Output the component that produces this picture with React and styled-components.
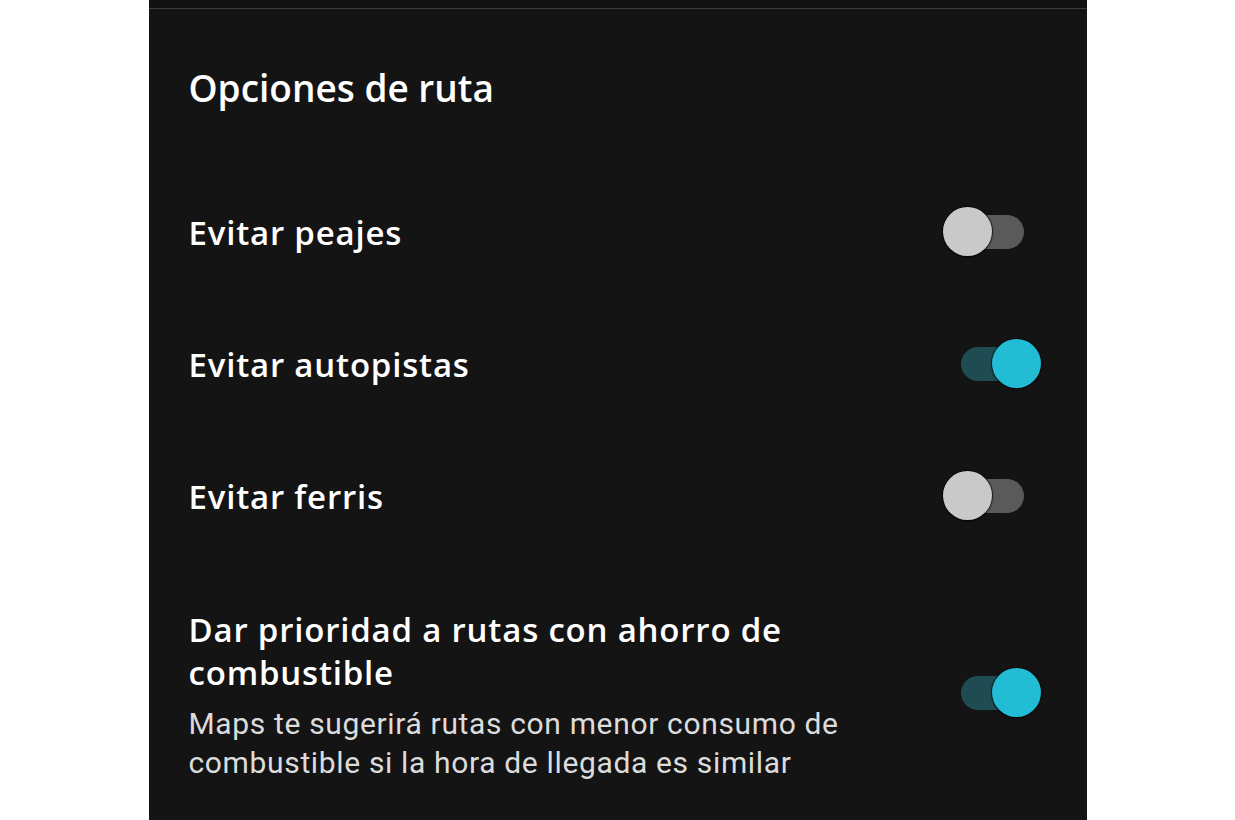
import React, { useState } from 'react'
import styled, { createGlobalStyle } from 'styled-components'

const GlobalStyle = createGlobalStyle`
	html, body {
		margin: 0;
		padding: 0;
		background: #ffffff;
	}
	body {
		font-family: Roboto, 'Noto Sans', sans-serif;
		-webkit-font-smoothing: antialiased;
	}
`

const Page = styled.div`
	display: flex;
	justify-content: center;
	height: 820px;
	overflow: hidden;
`

const Panel = styled.div`
	width: 938px;
	background: #141415;
	display: flex;
	flex-direction: column;
`

const TopStrip = styled.div`
	height: 8px;
	border-bottom: 1px solid #3c3c3e;
	background: #121213;
`

const Content = styled.div`
	padding: 0 46px 0 40px;
	display: flex;
	flex-direction: column;
`

const Title = styled.h1`
	margin: 0;
	height: 157px;
	padding-top: 51px;
	box-sizing: border-box;
	font-family: 'Open Sans', Roboto, sans-serif;
	font-size: 37px;
	font-weight: 600;
	line-height: 56px;
	color: #ffffff;
	letter-spacing: 0;
`

const Row = styled.div`
	display: flex;
	justify-content: space-between;
	gap: 40px;
	min-height: 132px;
	padding: ${(p) => (p.tall ? '46px 0 0' : '0')};
	align-items: ${(p) => (p.tall ? 'flex-start' : 'center')};
`

const TextBlock = styled.div`
	display: flex;
	flex-direction: column;
	max-width: 680px;
`

const Label = styled.div`
	font-family: 'Open Sans', Roboto, sans-serif;
	font-size: 33px;
	font-weight: 600;
	line-height: 43px;
	color: #ffffff;
	letter-spacing: 0.8px;
`

const Hint = styled.div`
	margin-top: 10px;
	font-size: 30px;
	font-weight: 400;
	line-height: 39px;
	color: #dcdcdc;
	letter-spacing: 0.65px;
`

const SwitchWrap = styled.button`
	position: relative;
	flex: none;
	width: 98px;
	height: 50px;
	padding: 0;
	border: none;
	background: transparent;
	cursor: pointer;
	align-self: center;
	margin-top: ${(p) => (p.shift ? '-4px' : '0')};
`

const Track = styled.span`
	position: absolute;
	left: 18px;
	right: 17px;
	top: 8px;
	height: 34px;
	border-radius: 17px;
	background: ${(p) => (p.on ? '#1f4c53' : '#5a5a5b')};
`

const Thumb = styled.span`
	position: absolute;
	top: 0;
	left: ${(p) => (p.on ? '49px' : '0')};
	width: 49px;
	height: 49px;
	border-radius: 50%;
	background: ${(p) => (p.on ? '#22bdd5' : '#c9c9c9')};
	box-shadow: 0 0 0 1px rgba(0, 0, 0, 0.55), 0 1px 3px rgba(0, 0, 0, 0.5);
`

function Switch({ initial, shift }) {
	const [on, setOn] = useState(initial)
	return (
		<SwitchWrap shift={shift} onClick={() => setOn(!on)} aria-pressed={on}>
			<Track on={on} />
			<Thumb on={on} />
		</SwitchWrap>
	)
}

const options = [
	{ label: 'Evitar peajes', on: false },
	{ label: 'Evitar autopistas', on: true },
	{ label: 'Evitar ferris', on: false }
]

export default function App() {
	return (
		<React.Fragment>
			<GlobalStyle />
			<Page>
				<Panel>
					<TopStrip />
					<Content>
						<Title>Opciones de ruta</Title>
						{options.map((o) => (
							<Row key={o.label}>
								<Label>{o.label}</Label>
								<Switch initial={o.on} />
							</Row>
						))}
						<Row tall>
							<TextBlock>
								<Label>Dar prioridad a rutas con ahorro de combustible</Label>
								<Hint>
									Maps te sugerirá rutas con menor consumo de combustible si la
									hora de llegada es similar
								</Hint>
							</TextBlock>
							<Switch initial shift />
						</Row>
					</Content>
				</Panel>
			</Page>
		</React.Fragment>
	)
}
